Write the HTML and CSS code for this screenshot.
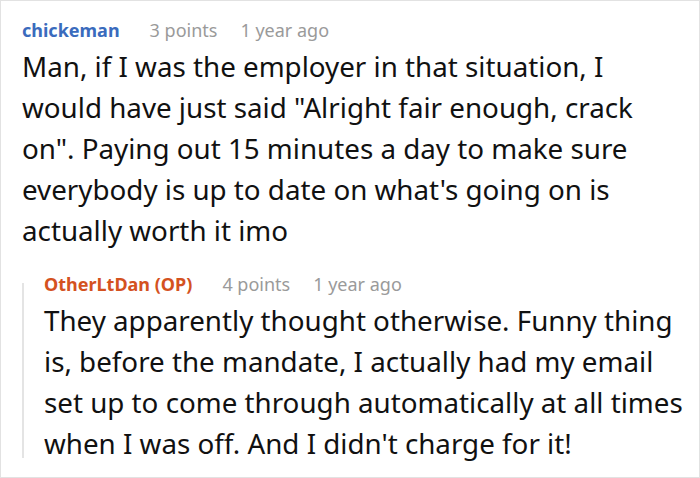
FILE: index.html
```html
<!DOCTYPE html>
<html>
<head>
<meta charset="utf-8">
<link rel="stylesheet" href="styles.css">
</head>
<body>
<div class="frame">
  <div class="comment">
    <div class="meta">
      <span class="author author-blue">chickeman</span>
      <span class="info">3 points</span>
      <span class="info">1 year ago</span>
    </div>
    <p class="text text-parent">Man, if I was the employer in that situation, I would have just said "Alright fair enough, crack on". Paying out 15 minutes a day to make sure everybody is up to date on what's going on is actually worth it imo</p>
    <div class="reply">
      <div class="meta meta-reply">
        <span class="author author-op">OtherLtDan (OP)</span>
        <span class="info">4 points</span>
        <span class="info">1 year ago</span>
      </div>
      <p class="text text-reply">They apparently thought otherwise. Funny thing is, before the mandate, I actually had my email set up to come through automatically at all times when I was off. And I didn't charge for it!</p>
    </div>
  </div>
</div>
</body>
</html>
```

FILE: styles.css
```css
html, body {
  margin: 0;
  padding: 0;
  background: #ffffff;
}
.frame {
  box-sizing: border-box;
  width: 700px;
  height: 478px;
  border: 1px solid #e2e2e2;
  overflow: hidden;
  font-family: "Noto Sans", "Open Sans", sans-serif;
  color: #111111;
}
.comment {
  padding: 16px 4px 0 21px;
}
.meta {
  display: flex;
  gap: 23px;
  font-size: 18px;
  line-height: 26px;
}
.author {
  font-weight: 700;
  margin-right: 7px;
}
.author-blue {
  color: #3a6bbd;
}
.author-op {
  color: #d4521f;
}
.info {
  color: #9a9a9a;
}
.text {
  margin: 3px 0 0 0;
  font-size: 27.75px;
  line-height: 41px;
}
.text-parent {
  padding-right: 12px;
}
.reply {
  display: flex;
  flex-direction: column;
  margin-top: 32px;
  border-left: 2px solid #e4e4e4;
  padding-left: 20px;
}
.meta-reply {
  margin-top: -12px;
}
.text-reply {
  margin-bottom: -6px;
}
```
